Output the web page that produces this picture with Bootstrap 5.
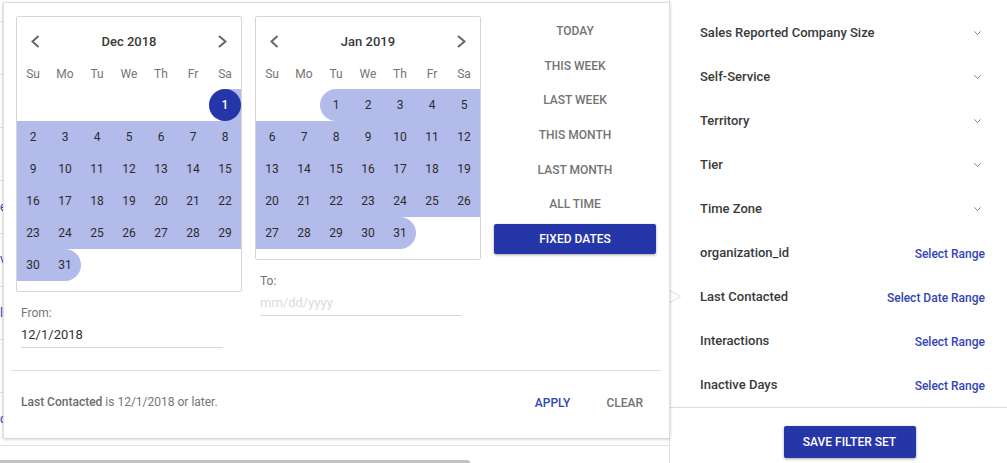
<!DOCTYPE html>
<html lang="en">

<head>
    <meta charset="UTF-8">
    <title>Last Contacted filter</title>
    <link href="https://cdn.jsdelivr.net/npm/bootstrap@5.3.0/dist/css/bootstrap.min.css" rel="stylesheet">
    <style>
        html, body { height: 463px; overflow: hidden; }
        body { font-family: Roboto, "Liberation Sans", sans-serif; font-size: 12px; color: #333; background: #fff; }

        /* table behind the popover */
        .page-left { width: 669px; flex: none; }
        .bg-row { height: 53px; border-bottom: 1px solid #e3e3e3; color: #2f41b0; font-size: 12px; }
        .bg-row:first-child { height: 22px; }
        .bg-row a { color: #2f41b0; text-decoration: none; }
        .h-scroll { width: 470px; height: 3px; margin-top: 14px; background: #c2c2c2; border-top-right-radius: 4px; }

        .date-popover { top: 2px; left: 3px; width: 667px; height: 436px; z-index: 5; border: 1px solid #dedede; border-bottom: 0; box-shadow: 0 1px 3px rgba(0, 0, 0, .25); padding: 13px 13px 0 12px; }
        .pop-body { height: 354px; }
        .cal-col { width: 226px; }
        .cal { border: 1px solid #d6d6d6; border-radius: 2px; padding-bottom: 10px; }
        .cal-head { height: 49px; padding: 0 14px; font-size: 13px; font-weight: 500; color: #3a3a3a; }
        .cal-head svg { width: 9px; height: 13px; fill: none; stroke: #666; stroke-width: 2; }
        .week, .days { display: grid; grid-template-columns: repeat(7, 32px); }
        .week { height: 23px; color: #757575; text-align: center; line-height: 16px; }
        .days div { height: 32px; display: flex; align-items: center; justify-content: center; background: #b3bbeb; color: #2c2c2c; }
        .days .first { border-radius: 16px 0 0 16px; }
        .days .last { border-radius: 0 16px 16px 0; }
        .days .selected { position: relative; color: #fff; font-weight: 500; z-index: 0; }
        .days .selected::before { content: ""; position: absolute; inset: 0; background: #2537a8; border-radius: 50%; z-index: -1; }

        .date-field { margin: 13px 19px 0 5px; }
        .date-field label { color: #757575; display: block; line-height: 16px; margin-bottom: 2px; }
        .date-field input { border: 0; border-bottom: 1px solid #d6d6d6; border-radius: 0; padding: 0 0 2px; height: 25px; min-height: 0; font-size: 13px; color: #333; box-shadow: none; background: transparent; }
        .date-field input::placeholder { color: #dadada; }

        .presets { width: 162px; gap: 4.67px; }
        .presets .btn { height: 30px; padding: 0; font-size: 12px; font-weight: 500; color: #737373; border: 0; border-radius: 2px; }
        .presets .btn.active, .btn-save { background: #2537a8; color: #fff; box-shadow: 0 1px 3px rgba(0, 0, 0, .35); }

        .pop-footer { margin: 0 -5px; height: 62px; border-top: 1px solid #dedede; padding: 0 10px; color: #757575; }
        .pop-footer b { font-weight: 500; color: #6c6c6c; }
        .pop-footer .btn { font-size: 12px; font-weight: 500; padding: 2px 0 0; border: 0; }
        .btn-apply { color: #3345b4; margin-right: 33px; }
        .btn-clear { color: #737373; margin-right: 8px; }

        /* filter panel */
        .filter-panel { width: 338px; flex: none; border-left: 1px solid #dedede; }
        .filter-row { height: 44px; padding: 0 22px 0 30px; font-size: 13px; font-weight: 500; color: #3a3a3a; }
        .filter-list { padding-top: 11px; height: 408px; border-bottom: 1px solid #dedede; }
        .filter-row a { font-size: 12px; color: #3345b4; text-decoration: none; padding-top: 1px; }
        .filter-row svg { width: 7px; height: 4px; fill: none; stroke: #888; stroke-width: 1; margin-right: 4px; }
        .panel-arrow { top: 290px; left: -1px; width: 12px; height: 13px; fill: #fff; stroke: #dedede; stroke-width: 1; }
        .save-wrap { padding-left: 22px; }
        .btn-save { width: 132px; height: 32px; padding: 0; font-size: 12px; font-weight: 500; border: 0; border-radius: 2px; margin-top: 18px; }
        .btn-save:hover, .presets .btn.active:hover { background: #2537a8; color: #fff; }
    </style>
</head>

<body>
    <div class="d-flex position-relative">
        <!-- lista de fondo, tapada por el popover -->
        <div class="page-left">
            <div class="bg-row"></div>
            <div class="bg-row"></div>
            <div class="bg-row"></div>
            <div class="bg-row"></div>
            <div class="bg-row d-flex align-items-center"><a href="#">e</a></div>
            <div class="bg-row d-flex align-items-start pt-3"><a href="#">v</a></div>
            <div class="bg-row d-flex align-items-center"><a href="#">l</a></div>
            <div class="bg-row"></div>
            <div class="bg-row d-flex align-items-center"><a href="#">c</a></div>
            <div class="h-scroll"></div>
        </div>

        <div class="date-popover position-absolute bg-white">
            <div class="pop-body d-flex justify-content-between">
                <div class="cal-col">
                    <div class="cal card">
                        <div class="cal-head d-flex align-items-center justify-content-between">
                            <svg viewBox="0 0 9 13"><path d="M7.5 1 1.5 6.5 7.5 12"/></svg>
                            <span>Dec 2018</span>
                            <svg viewBox="0 0 9 13"><path d="M1 1 7.5 6.5 1 12"/></svg>
                        </div>
                        <div class="week"><span>Su</span><span>Mo</span><span>Tu</span><span>We</span><span>Th</span><span>Fr</span><span>Sa</span></div>
                        <div class="days" id="dec"></div>
                    </div>
                    <div class="date-field">
                        <label for="dateFrom">From:</label>
                        <input id="dateFrom" class="form-control" type="text" value="12/1/2018">
                    </div>
                </div>

                <div class="cal-col">
                    <div class="cal card">
                        <div class="cal-head d-flex align-items-center justify-content-between">
                            <svg viewBox="0 0 9 13"><path d="M7.5 1 1.5 6.5 7.5 12"/></svg>
                            <span>Jan 2019</span>
                            <svg viewBox="0 0 9 13"><path d="M1 1 7.5 6.5 1 12"/></svg>
                        </div>
                        <div class="week"><span>Su</span><span>Mo</span><span>Tu</span><span>We</span><span>Th</span><span>Fr</span><span>Sa</span></div>
                        <div class="days" id="jan"></div>
                    </div>
                    <div class="date-field">
                        <label for="dateTo">To:</label>
                        <input id="dateTo" class="form-control" type="text" placeholder="mm/dd/yyyy">
                    </div>
                </div>

                <div class="presets d-flex flex-column">
                    <button class="btn" type="button">TODAY</button>
                    <button class="btn" type="button">THIS WEEK</button>
                    <button class="btn" type="button">LAST WEEK</button>
                    <button class="btn" type="button">THIS MONTH</button>
                    <button class="btn" type="button">LAST MONTH</button>
                    <button class="btn" type="button">ALL TIME</button>
                    <button class="btn active" type="button">FIXED DATES</button>
                </div>
            </div>

            <div class="pop-footer d-flex align-items-center justify-content-between">
                <span><b>Last Contacted</b> is 12/1/2018 or later.</span>
                <span>
                    <button class="btn btn-apply" type="button">APPLY</button>
                    <button class="btn btn-clear" type="button">CLEAR</button>
                </span>
            </div>
        </div>

        <div class="filter-panel position-relative bg-white">
            <svg class="panel-arrow position-absolute" viewBox="0 0 12 13"><path d="M1 .5 11.5 6.5 1 12.5"/></svg>
            <div class="filter-list">
                <div class="filter-row d-flex align-items-center justify-content-between">Sales Reported Company Size <svg viewBox="0 0 7 4"><path d="M.3.3 3.5 3.5 6.7.3"/></svg></div>
                <div class="filter-row d-flex align-items-center justify-content-between">Self-Service <svg viewBox="0 0 7 4"><path d="M.3.3 3.5 3.5 6.7.3"/></svg></div>
                <div class="filter-row d-flex align-items-center justify-content-between">Territory <svg viewBox="0 0 7 4"><path d="M.3.3 3.5 3.5 6.7.3"/></svg></div>
                <div class="filter-row d-flex align-items-center justify-content-between">Tier <svg viewBox="0 0 7 4"><path d="M.3.3 3.5 3.5 6.7.3"/></svg></div>
                <div class="filter-row d-flex align-items-center justify-content-between">Time Zone <svg viewBox="0 0 7 4"><path d="M.3.3 3.5 3.5 6.7.3"/></svg></div>
                <div class="filter-row d-flex align-items-center justify-content-between">organization_id <a href="#">Select Range</a></div>
                <div class="filter-row d-flex align-items-center justify-content-between">Last Contacted <a href="#">Select Date Range</a></div>
                <div class="filter-row d-flex align-items-center justify-content-between">Interactions <a href="#">Select Range</a></div>
                <div class="filter-row d-flex align-items-center justify-content-between">Inactive Days <a href="#">Select Range</a></div>
            </div>
            <div class="save-wrap text-center">
                <button class="btn btn-save" type="button">SAVE FILTER SET</button>
            </div>
        </div>
    </div>

    <script>
        // arma la grilla de un mes, todo el mes queda dentro del rango
        function fillMonth(id, firstColumn, total, firstClass) {
            const grid = document.getElementById(id);
            for (let day = 1; day <= total; day++) {
                const cell = document.createElement('div');
                cell.textContent = day;
                if (day === 1) {
                    cell.style.gridColumnStart = firstColumn;
                    cell.className = firstClass;
                }
                if (day === total) cell.className = 'last';
                grid.appendChild(cell);
            }
        }
        fillMonth('dec', 7, 31, 'first selected');
        fillMonth('jan', 3, 31, 'first');
    </script>
    <script src="https://cdn.jsdelivr.net/npm/bootstrap@5.3.0/dist/js/bootstrap.bundle.min.js"></script>
</body>

</html>
